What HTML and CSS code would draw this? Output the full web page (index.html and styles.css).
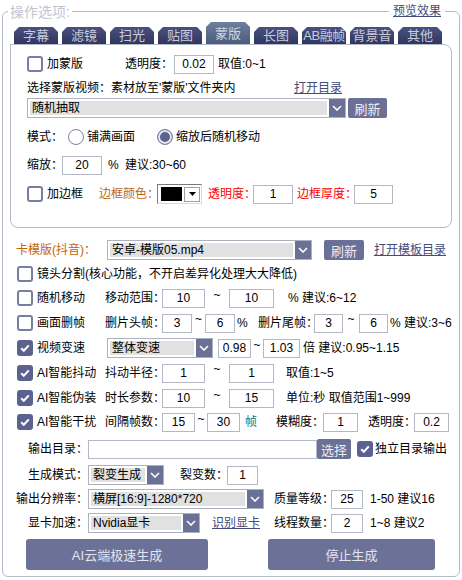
FILE: index.html
```html
<!DOCTYPE html>
<html lang="zh-CN">

<head>
  <meta charset="UTF-8" />
  <title>操作选项</title>
  <link rel="stylesheet" href="styles.css">
</head>

<body>

  <div class="ops">
    <div class="ops-head">
      <span class="ops-title">操作选项:</span>
      <a class="link preview" href="#">预览效果</a>
    </div>

    <!-- Tabs -->
    <div class="tabs">
      <div class="tab">字幕</div>
      <div class="tab">滤镜</div>
      <div class="tab">扫光</div>
      <div class="tab">贴图</div>
      <div class="tab active">蒙版</div>
      <div class="tab">长图</div>
      <div class="tab tight">AB融帧</div>
      <div class="tab">背景音</div>
      <div class="tab">其他</div>
    </div>

    <!-- Mask panel -->
    <div class="panel">
      <div class="prow">
        <label class="check"><span class="cb"></span><span class="w78">加蒙版</span></label>
        <span class="w49">透明度：</span>
        <input class="num w40" value="0.02">
        <span class="ml4">取值:0~1</span>
      </div>

      <div class="prow mt4">
        <span class="w267">选择蒙版视频：素材放至'蒙版'文件夹内</span>
        <a class="link" href="#">打开目录</a>
      </div>

      <div class="prow">
        <div class="combo w319">
          <span class="combo-text">随机抽取</span>
          <span class="combo-btn"><svg width="10" height="6" viewBox="0 0 10 6"><path d="M1 1l4 4 4-4" /></svg></span>
        </div>
        <button class="btn ml2 w39">刷新</button>
      </div>

      <div class="prow mt9">
        <span class="w41">模式：</span>
        <label class="radio-item w89"><span class="radio"></span>铺满画面</label>
        <label class="radio-item"><span class="radio on"></span>缩放后随机移动</label>
      </div>

      <div class="prow mt8">
        <span class="w35">缩放：</span>
        <input class="num w40" value="20">
        <span class="ml6 w17">%</span>
        <span>建议:30~60</span>
      </div>

      <div class="prow mt9">
        <label class="check"><span class="cb"></span><span class="w52">加边框</span></label>
        <span class="brown w58">边框颜色：</span>
        <div class="color-pick">
          <span class="swatch"></span>
          <span class="pick-btn"><svg width="7" height="4" viewBox="0 0 7 4"><path d="M0 0h7L3.5 4z" /></svg></span>
        </div>
        <span class="red ml6 w45">透明度：</span>
        <input class="num w40" value="1">
        <span class="red ml4 w57">边框厚度：</span>
        <input class="num w39" value="5">
      </div>
    </div>

    <!-- Template -->
    <div class="row card-row">
      <span class="brown w91">卡模版(抖音)：</span>
      <div class="combo w205">
        <span class="combo-text">安卓-模版05.mp4</span>
        <span class="combo-btn"><svg width="10" height="6" viewBox="0 0 10 6"><path d="M1 1l4 4 4-4" /></svg></span>
      </div>
      <button class="btn ml12 w40">刷新</button>
      <a class="link ml10" href="#">打开模板目录</a>
    </div>

    <!-- Effect switches -->
    <div class="row crow">
      <label class="check"><span class="cb"></span><span>镜头分割(核心功能，不开启差异化处理大大降低)</span></label>
    </div>

    <div class="row crow">
      <label class="check"><span class="cb"></span><span class="w68">随机移动</span></label>
      <span class="w57">移动范围：</span>
      <input class="num w43" value="10">
      <span class="tilde w24">~</span>
      <input class="num w45" value="10">
      <span class="ml14">% 建议:6~12</span>
    </div>

    <div class="row crow h26">
      <label class="check"><span class="cb"></span><span class="w68">画面删帧</span></label>
      <span class="w57">删片头帧：</span>
      <input class="num w30" value="3">
      <span class="tilde w13">~</span>
      <input class="num w30" value="6">
      <span class="pct w23">%</span>
      <span class="w56">删片尾帧：</span>
      <input class="num w29" value="3">
      <span class="tilde w16">~</span>
      <input class="num w29" value="6">
      <span class="ml2">% 建议:3~6</span>
    </div>

    <div class="row crow">
      <label class="check"><span class="cb on"><svg width="12" height="12" viewBox="0 0 12 12"><path d="M2.2 6.2l2.6 2.6 5-5.4" /></svg></span><span class="w70">视频变速</span></label>
      <div class="combo w106">
        <span class="combo-text">整体变速</span>
        <span class="combo-btn"><svg width="10" height="6" viewBox="0 0 10 6"><path d="M1 1l4 4 4-4" /></svg></span>
      </div>
      <input class="num ml5 w33" value="0.98">
      <span class="tilde w12">~</span>
      <input class="num w37" value="1.03">
      <span class="ml3">倍 建议:0.95~1.15</span>
    </div>

    <div class="row crow h26">
      <label class="check"><span class="cb on"><svg width="12" height="12" viewBox="0 0 12 12"><path d="M2.2 6.2l2.6 2.6 5-5.4" /></svg></span><span class="w68">AI智能抖动</span></label>
      <span class="w57">抖动半径：</span>
      <input class="num w43" value="1">
      <span class="tilde w24">~</span>
      <input class="num w45" value="1">
      <span class="ml12">取值:1~5</span>
    </div>

    <div class="row crow">
      <label class="check"><span class="cb on"><svg width="12" height="12" viewBox="0 0 12 12"><path d="M2.2 6.2l2.6 2.6 5-5.4" /></svg></span><span class="w68">AI智能伪装</span></label>
      <span class="w57">时长参数：</span>
      <input class="num w43" value="10">
      <span class="tilde w24">~</span>
      <input class="num w45" value="15">
      <span class="ml12">单位:秒 取值范围1~999</span>
    </div>

    <div class="row crow">
      <label class="check"><span class="cb on"><svg width="12" height="12" viewBox="0 0 12 12"><path d="M2.2 6.2l2.6 2.6 5-5.4" /></svg></span><span class="w68">AI智能干扰</span></label>
      <span class="w57">间隔帧数：</span>
      <input class="num w33" value="15">
      <span class="tilde w12">~</span>
      <input class="num w33" value="30">
      <span class="teal ml5 w12">帧</span>
      <span class="ml19 w47">模糊度：</span>
      <input class="num w35" value="1">
      <span class="ml10 w46">透明度：</span>
      <input class="num w35" value="0.2">
    </div>

    <!-- Output -->
    <div class="row frow h30">
      <span class="flabel">输出目录：</span>
      <input class="num w229" value="">
      <button class="btn w34">选择</button>
      <label class="check tight-check ml6"><span class="cb on"><svg width="12" height="12" viewBox="0 0 12 12"><path d="M2.2 6.2l2.6 2.6 5-5.4" /></svg></span><span>独立目录输出</span></label>
    </div>

    <div class="row frow h22">
      <span class="flabel">生成模式：</span>
      <div class="combo w76">
        <span class="combo-text">裂变生成</span>
        <span class="combo-btn"><svg width="10" height="6" viewBox="0 0 10 6"><path d="M1 1l4 4 4-4" /></svg></span>
      </div>
      <span class="ml16 w47">裂变数：</span>
      <input class="num w31" value="1">
    </div>

    <div class="row frow h26">
      <span class="flabel">输出分辨率：</span>
      <div class="combo w176">
        <span class="combo-text">横屏[16:9]-1280*720</span>
        <span class="combo-btn"><svg width="10" height="6" viewBox="0 0 10 6"><path d="M1 1l4 4 4-4" /></svg></span>
      </div>
      <span class="ml10 w57">质量等级：</span>
      <input class="num w32" value="25">
      <span class="ml7">1-50 建议16</span>
    </div>

    <div class="row frow h22">
      <span class="flabel">显卡加速：</span>
      <div class="combo w112">
        <span class="combo-text">Nvidia显卡</span>
        <span class="combo-btn"><svg width="10" height="6" viewBox="0 0 10 6"><path d="M1 1l4 4 4-4" /></svg></span>
      </div>
      <a class="link ml12 w48" href="#">识别显卡</a>
      <span class="ml14 w57">线程数量：</span>
      <input class="num w32" value="2">
      <span class="ml7">1~8 建议2</span>
    </div>

    <div class="actions">
      <button class="big-btn w182">AI云端极速生成</button>
      <button class="big-btn w167">停止生成</button>
    </div>
  </div>

</body>

</html>
```

FILE: styles.css
```css
:root {
  --line: #b6bac8;
  --field: #b4b8c6;
  --accent: #6b7096;
  --check: #5c6290;
  --link: #454b7b;
}

body {
  margin: 0;
  font-family: "Liberation Sans", "Noto Sans CJK SC", sans-serif;
  font-size: 12px;
  line-height: 16px;
  color: #000;
  background: #fff;
}

/* outer group box */
.ops {
  margin: 11px 0 0 2px;
  width: 458px;
  box-sizing: border-box;
  padding-bottom: 6px;
  border: 1px solid var(--line);
  border-radius: 6px;
}

.ops-head {
  display: flex;
  justify-content: space-between;
  align-items: flex-start;
  height: 18px;
  margin-top: -9px;
  padding: 0 14px 0 5px;
}

.ops-title {
  padding: 0 2px;
  font-size: 14px;
  line-height: 18px;
  color: #c2c6d2;
  background: #fff;
}

.preview {
  padding: 0 4px;
  background: #fff;
}

.link {
  color: var(--link);
  text-decoration: underline;
}

/* tabs */
.tabs {
  display: flex;
  align-items: flex-end;
  gap: 4px;
  height: 22px;
  margin: 1px 0 0 11px;
}

.tab {
  width: 44px;
  height: 17px;
  line-height: 17px;
  font-size: 13px;
  text-align: center;
  white-space: nowrap;
  color: #c8cbda;
  background: linear-gradient(#4a5180, #2f365f);
  clip-path: polygon(5px 0, calc(100% - 5px) 0, 100% 5px, 100% 100%, 0 100%, 0 5px);
}

.tab.active {
  height: 22px;
  line-height: 20px;
  padding-top: 2px;
  box-sizing: border-box;
  color: #cdd3e0;
  background: linear-gradient(#6c7f9c, #4b5c7c);
}

.tab.tight {
  letter-spacing: -0.4px;
}

/* tab panel */
.panel {
  margin-left: 7px;
  width: 442px;
  height: 184px;
  box-sizing: border-box;
  padding: 9px 0 0 16px;
  border: 1px solid var(--line);
  border-radius: 0 8px 8px 8px;
}

.prow,
.row {
  display: flex;
  align-items: center;
}

.prow {
  height: 20px;
}

.row {
  height: 24px;
}

.prow > *,
.row > * {
  flex: none;
  white-space: nowrap;
}

.row.h22 { height: 22px; }
.row.h26 { height: 26px; }
.row.h30 { height: 30px; }

.card-row {
  margin-top: 10px;
  padding-left: 13px;
}

.crow {
  padding-left: 14px;
}

.frow {
  padding-left: 13px;
}

.flabel {
  width: 72px;
  text-align: right;
}

/* checkbox + radio */
.check {
  display: flex;
  align-items: center;
  gap: 4px;
}

.tight-check {
  gap: 2px;
}

.cb {
  display: flex;
  align-items: center;
  justify-content: center;
  width: 16px;
  height: 16px;
  box-sizing: border-box;
  border: 2px solid #787ea2;
  border-radius: 3px;
  background: #fff;
}

.cb.on {
  border-color: var(--check);
  background: var(--check);
}

.cb svg path {
  fill: none;
  stroke: #fff;
  stroke-width: 2;
}

.radio-item {
  display: flex;
  align-items: center;
  gap: 3px;
}

.radio {
  width: 16px;
  height: 16px;
  box-sizing: border-box;
  border: 1.5px solid #7c82a4;
  border-radius: 50%;
  background: #fff;
}

.radio.on {
  background: var(--check);
  box-shadow: inset 0 0 0 2px #e8e9f0;
}

/* inputs */
.num {
  height: 19px;
  box-sizing: border-box;
  padding: 0;
  border: 1px solid var(--field);
  font: 12px "Liberation Sans", sans-serif;
  text-align: center;
  color: #000;
  background: #fff;
}

.tilde {
  align-self: flex-start;
  margin-top: 3px;
  line-height: 12px;
  text-align: center;
}

.pct {
  padding-left: 2px;
  box-sizing: border-box;
}

/* drop-down boxes */
.combo {
  display: flex;
  height: 20px;
  box-sizing: border-box;
  border: 1px solid #aeb2be;
  background: #fff;
}

.combo-text {
  flex: 1;
  margin: 2px;
  padding-left: 2px;
  line-height: 14px;
  overflow: hidden;
  background: #e1e1e1;
}

.combo-btn {
  display: flex;
  align-items: center;
  justify-content: center;
  width: 16px;
  background: var(--accent);
}

.combo-btn path {
  fill: none;
  stroke: #fff;
  stroke-width: 1.6;
}

.color-pick {
  display: flex;
  align-items: center;
  gap: 2px;
  width: 45px;
  height: 20px;
  box-sizing: border-box;
  padding: 0 1px 0 3px;
  border: 1px solid;
  border-color: #7a7a7a #dadada #dadada #7a7a7a;
}

.swatch {
  width: 22px;
  height: 14px;
  background: #000;
}

.pick-btn {
  display: flex;
  align-items: center;
  justify-content: center;
  width: 16px;
  height: 15px;
  box-sizing: border-box;
  border: 1px solid #a0a0a0;
  background: #fff;
}

/* buttons */
.btn {
  height: 20px;
  padding: 0;
  border: none;
  border-radius: 2px;
  font: 13px "Liberation Sans", "Noto Sans CJK SC", sans-serif;
  color: #eceef6;
  background: var(--accent);
}

.actions {
  display: flex;
  gap: 60px;
  margin-top: 5px;
  padding-left: 23px;
}

.big-btn {
  height: 31px;
  padding: 0;
  border: none;
  border-radius: 3px;
  font: 13px "Liberation Sans", "Noto Sans CJK SC", sans-serif;
  color: #e2e4ee;
  background: #6c7198;
}

/* text colours */
.brown { color: #c0640c; }
.red { color: #f00; }
.teal { color: #0a7a7a; }

/* widths and spacing */
.w12 { width: 12px; }
.w13 { width: 13px; }
.w16 { width: 16px; }
.w17 { width: 17px; }
.w23 { width: 23px; }
.w24 { width: 24px; }
.w29 { width: 29px; }
.w30 { width: 30px; }
.w31 { width: 31px; }
.w32 { width: 32px; }
.w33 { width: 33px; }
.w34 { width: 34px; }
.w35 { width: 35px; }
.w37 { width: 37px; }
.w39 { width: 39px; }
.w40 { width: 40px; }
.w41 { width: 41px; }
.w43 { width: 43px; }
.w45 { width: 45px; }
.w46 { width: 46px; }
.w47 { width: 47px; }
.w48 { width: 48px; display: inline-block; }
.w49 { width: 49px; }
.w52 { width: 52px; }
.w56 { width: 56px; }
.w57 { width: 57px; }
.w58 { width: 58px; }
.w68 { width: 68px; }
.w70 { width: 70px; }
.w76 { width: 76px; }
.w78 { width: 78px; }
.w89 { width: 89px; }
.w91 { width: 91px; }
.w106 { width: 106px; }
.w112 { width: 112px; }
.w167 { width: 167px; }
.w176 { width: 176px; }
.w182 { width: 182px; }
.w205 { width: 205px; }
.w229 { width: 229px; }
.w267 { width: 267px; }
.w319 { width: 319px; }

.ml2 { margin-left: 2px; }
.ml3 { margin-left: 3px; }
.ml4 { margin-left: 4px; }
.ml5 { margin-left: 5px; }
.ml6 { margin-left: 6px; }
.ml7 { margin-left: 7px; }
.ml10 { margin-left: 10px; }
.ml12 { margin-left: 12px; }
.ml14 { margin-left: 14px; }
.ml16 { margin-left: 16px; }
.ml19 { margin-left: 19px; }

.mt4 { margin-top: 4px; }
.mt8 { margin-top: 8px; }
.mt9 { margin-top: 9px; }
```
